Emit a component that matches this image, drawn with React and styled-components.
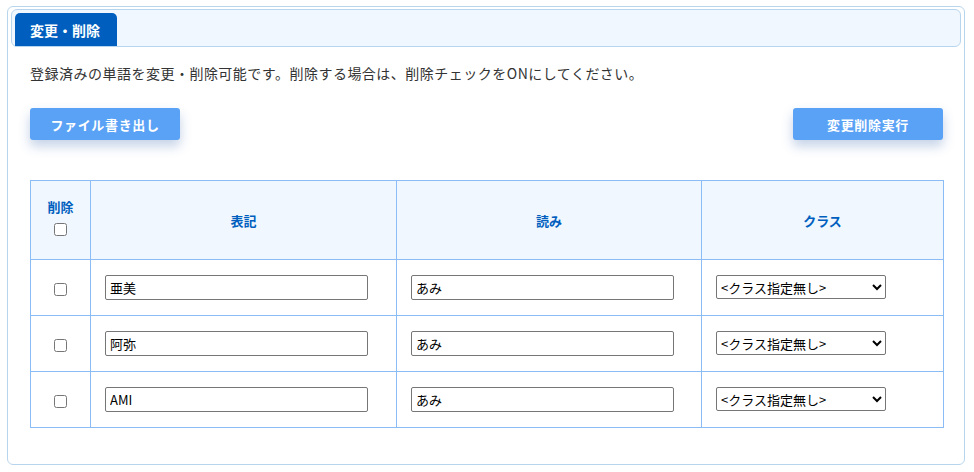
import React from "react";
import styled, { createGlobalStyle } from "styled-components";

const rows = [
    { id: 1, word: "亜美", reading: "あみ" },
    { id: 2, word: "阿弥", reading: "あみ" },
    { id: 3, word: "AMI", reading: "あみ" },
];

function App() {
    return (
        <>
            <GlobalStyle />
            <Panel>
                <TabBar>
                    <Tab>変更・削除</Tab>
                </TabBar>
                <Body>
                    <Description>
                        登録済みの単語を変更・削除可能です。削除する場合は、削除チェックをONにしてください。
                    </Description>
                    <Actions>
                        <Button>ファイル書き出し</Button>
                        <Button>変更削除実行</Button>
                    </Actions>
                    <Table>
                        <colgroup>
                            <col style={{ width: 60 }} />
                            <col style={{ width: 306 }} />
                            <col style={{ width: 305 }} />
                            <col />
                        </colgroup>
                        <thead>
                            <tr>
                                <Th stacked>
                                    削除
                                    <CheckWrap>
                                        <Check type="checkbox" />
                                    </CheckWrap>
                                </Th>
                                <Th>表記</Th>
                                <Th>読み</Th>
                                <Th>クラス</Th>
                            </tr>
                        </thead>
                        <tbody>
                            {rows.map((r) => (
                                <tr key={r.id}>
                                    <Td center>
                                        <Check type="checkbox" />
                                    </Td>
                                    <Td>
                                        <TextInput defaultValue={r.word} />
                                    </Td>
                                    <Td>
                                        <TextInput defaultValue={r.reading} />
                                    </Td>
                                    <Td>
                                        <Select defaultValue="none">
                                            <option value="none">
                                                &lt;クラス指定無し&gt;
                                            </option>
                                        </Select>
                                    </Td>
                                </tr>
                            ))}
                        </tbody>
                    </Table>
                </Body>
            </Panel>
        </>
    );
}

const GlobalStyle = createGlobalStyle`
    body {
        margin: 0;
        background: #fff;
        font-family: "Noto Sans CJK JP", "Noto Sans", sans-serif;
        color: #333;
    }
`;
const Panel = styled.div`
    margin: 6px 7px 0;
    width: 958px;
    height: 459px;
    box-sizing: border-box;
    border: 1px solid #b8d5ee;
    border-radius: 6px;
    padding: 2px 3px;
`;
const TabBar = styled.div`
    height: 38px;
    box-sizing: border-box;
    background: #f0f7ff;
    border: 1px solid #b8d5ee;
    border-radius: 6px;
    padding: 4px 0 0 3px;
    display: flex;
    align-items: flex-end;
`;
const Tab = styled.div`
    width: 102px;
    height: 33px;
    box-sizing: border-box;
    background: #005fbe;
    color: #fff;
    font-size: 14px;
    font-weight: 700;
    border-radius: 5px 5px 0 0;
    padding-left: 15px;
    display: flex;
    align-items: center;
`;
const Body = styled.div`
    padding: 0 18px 0 19px;
`;
const Description = styled.p`
    margin: 16px 0 0;
    font-size: 14px;
    letter-spacing: 0.035em;
    line-height: 20px;
    color: #333;
`;
const Actions = styled.div`
    display: flex;
    justify-content: space-between;
    margin-top: 25px;
`;
const Button = styled.button`
    width: 150px;
    height: 32px;
    border: none;
    border-radius: 3px;
    background: #5aa2f5;
    color: #fff;
    font-family: inherit;
    font-size: 13px;
    font-weight: 700;
    letter-spacing: 0.05em;
    box-shadow: 0 6px 12px rgba(40, 90, 170, 0.28);
    cursor: pointer;
`;
const Table = styled.table`
    margin-top: 40px;
    width: 914px;
    border-collapse: collapse;
    table-layout: fixed;
    tbody tr {
        height: 56px;
    }
`;
const Th = styled.th`
    height: 70px;
    background: #f0f7ff;
    border: 1px solid #8cbcf6;
    color: #005fbe;
    font-size: 13px;
    font-weight: 700;
    text-align: center;
    vertical-align: middle;
    padding: 0 0 ${(p) => (p.stacked ? "8px" : "0")};
`;
const CheckWrap = styled.div`
    display: flex;
    justify-content: center;
    margin-top: 7px;
`;
const Td = styled.td`
    border: 1px solid #8cbcf6;
    padding: 0 0 2px ${(p) => (p.center ? "0" : "14px")};
    vertical-align: middle;
    text-align: ${(p) => (p.center ? "center" : "left")};
`;
const Check = styled.input`
    width: 13px;
    height: 13px;
    margin: 0;
    vertical-align: middle;
`;
const TextInput = styled.input`
    width: 263px;
    height: 25px;
    box-sizing: border-box;
    border: 1px solid #767676;
    border-radius: 2px;
    padding: 1px 4px;
    font-family: inherit;
    font-size: 13px;
    color: #000;
`;
const Select = styled.select`
    width: 170px;
    height: 24px;
    box-sizing: border-box;
    border: 1px solid #767676;
    border-radius: 2px;
    font-family: inherit;
    font-size: 13px;
    color: #000;
    background: #fff;
`;

export default App;
